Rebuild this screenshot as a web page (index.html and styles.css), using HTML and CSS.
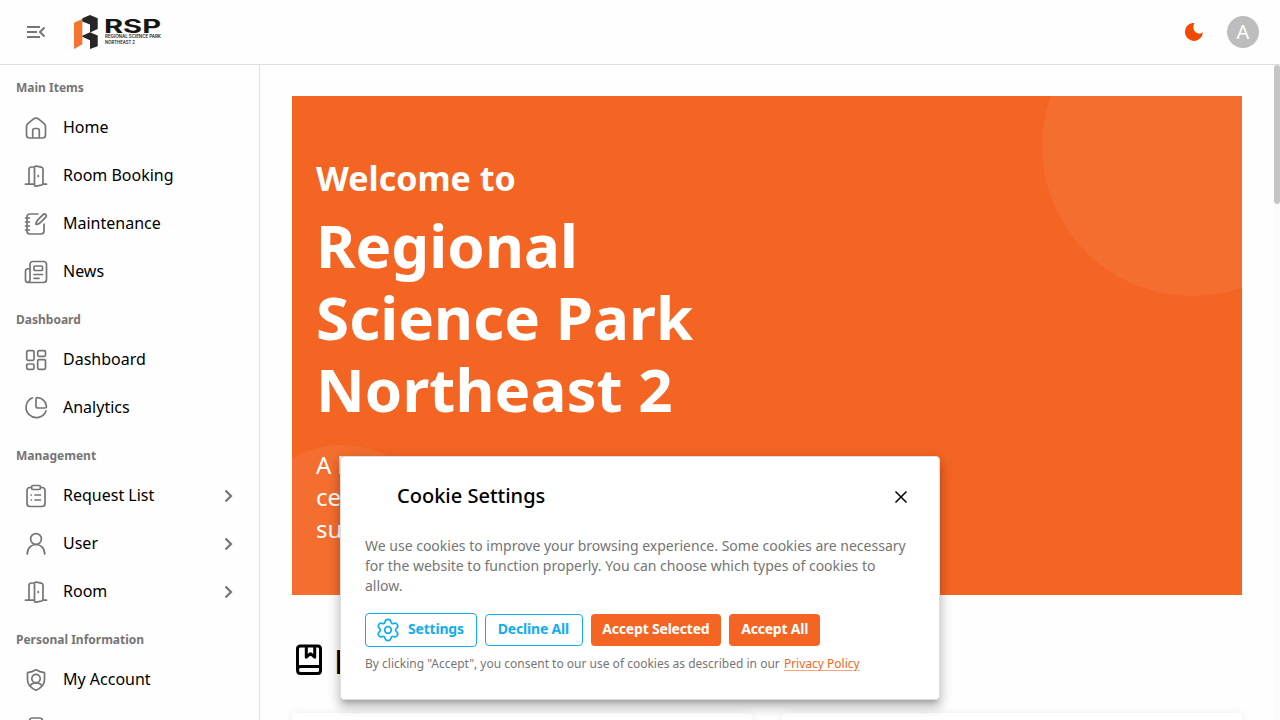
FILE: index.html
```html
<!DOCTYPE html>
<html lang="en">
<head>
<meta charset="utf-8">
<title>Regional Science Park Northeast 2</title>
<link rel="stylesheet" href="styles.css">
</head>
<body>
<svg class="defs" aria-hidden="true">
  <symbol id="door" viewBox="0 0 24 24"><path d="M1.500 20.200h9M18.500 20.200h4M5 20V5.500C5 4 5.700 3 7.500 3h3M10.500 3.700v17.200c0 1 .6 1.500 1.700 1.300l5-1c1.300-.3 1.800-1 1.800-2.200V5.300c0-1.300-.5-1.900-1.800-2.100l-4.700-1.100c-1.400-.3-2 .4-2 1.600z"/><path d="M14.200 11.500v1"/></symbol>
  <symbol id="chevron" viewBox="0 0 24 24"><path d="m9.500 6.500 5.500 5.500-5.500 5.500"/></symbol>
</svg>
<header class="topbar">
  <button class="icon-button" aria-label="Collapse menu"><svg class="menu-icon" viewBox="0 0 24 24"><path d="M3 7h13M3 12h10M3 17h13M20.500 7.500 16 12l4.500 4.500"/></svg></button>
  <svg class="logo" viewBox="0 0 90 36" aria-label="RSP">
    <path fill="#f47430" d="M1 8.800 9.300 5v25.200L1 35z"/>
    <path fill="#272525" d="M9.300 4.300 17 1l7.700 3.300V15L17 18.500v-8L9.300 7.500z"/>
    <path fill="#272525" d="M9.300 21.700 17 18.300l7.700 3.200v10.800L17 35v-8.800l-7.700-3.500z"/>
    <text class="logo-name" x="31" y="18.700" textLength="57" lengthAdjust="spacingAndGlyphs">RSP</text>
    <text class="logo-sub" x="32" y="24" textLength="56" lengthAdjust="spacingAndGlyphs">REGIONAL SCIENCE PARK</text>
    <text class="logo-sub" x="32" y="30" textLength="30" lengthAdjust="spacingAndGlyphs">NORTHEAST 2</text>
  </svg>
  <div class="top-actions">
    <svg class="moon" viewBox="0 0 24 24"><path d="M10.500 3a9 9 0 1 0 10.400 9.300C16 16.500 8.500 10.500 12.500 3.100Q11.500 3 10.500 3z"/></svg>
    <div class="avatar">A</div>
  </div>
</header>
<div class="shell">
  <nav class="sidebar">
    <h2 class="nav-title">Main Items</h2>
    <a class="nav-item"><svg class="icon" viewBox="0 0 24 24"><path d="M2.500 10.500c0-1.500.5-2.200 1.600-3.100l5.200-4.200c1.900-1.500 3.500-1.500 5.400 0l5.200 4.200c1.100.9 1.600 1.600 1.600 3.100V19c0 2-1 3-3 3h-13c-2 0-3-1-3-3zM8.700 21.500v-7c0-1.300.7-2 2-2h2.600c1.300 0 2 .7 2 2v7"/></svg>Home</a>
    <a class="nav-item"><svg class="icon"><use href="#door"/></svg>Room Booking</a>
    <a class="nav-item"><svg class="icon" viewBox="0 0 24 24"><path d="M14 2H6C4 2 3 3 3 5v14c0 2 1 3 3 3h11c2 0 3-1 3-3v-7M1.500 6h4M1.500 10h4M1.500 14h4M1.500 18h4M12 12.500c0-2 .4-3.300 1.800-4.700l5-5c2-2 4.700.5 2.800 2.600l-5 5c-1.300 1.400-2.600 2-4.600 2.100z"/></svg>Maintenance</a>
    <a class="nav-item"><svg class="icon" viewBox="0 0 24 24"><path d="M9 1.500h10.500c2 0 3 1 3 3v15c0 2-1 3-3 3h-15c-1.700 0-3-1-3-2.500V11c0-1.500 1-2.500 4.500-2.500M6 19.500v-15c0-2 1-3 3-3M6 19.500c0 2-1 3-2.500 3M10 14.500h8.500M10 18.300h5"/><rect x="10" y="6" width="8.500" height="4.500" rx="1"/></svg>News</a>
    <h2 class="nav-title">Dashboard</h2>
    <a class="nav-item"><svg class="icon" viewBox="0 0 24 24"><rect x="2.700" y="2.700" width="7.300" height="9.600" rx="1.200"/><rect x="13.700" y="2.700" width="7.800" height="5.600" rx="1.200"/><rect x="2.700" y="16" width="7.300" height="5.300" rx="1.200"/><rect x="13.700" y="11.700" width="7.800" height="9.600" rx="1.200"/></svg>Dashboard</a>
    <a class="nav-item"><svg class="icon" viewBox="0 0 24 24"><path d="M8.500 1.800A10.300 10.300 0 1 0 22 15M12 3.300C12 2 12.500 1.400 14 1.600A9.500 9.500 0 0 1 22.400 10c.2 1.500-.3 2-1.600 2H14c-1.500 0-2-.5-2-2z"/></svg>Analytics</a>
    <h2 class="nav-title">Management</h2>
    <a class="nav-item"><svg class="icon" viewBox="0 0 24 24"><path d="M7.500 3.500H6c-2 0-3 1-3 3V19.500c0 2 1 3 3 3h12c2 0 3-1 3-3v-13c0-2-1-3-3-3h-1.500M7.200 11h.2M11 11h5.500M7.200 16h.2M11 16h5.500"/><rect x="7.500" y="1.500" width="9" height="4" rx="1.500"/></svg>Request List<svg class="chevron"><use href="#chevron"/></svg></a>
    <a class="nav-item"><svg class="icon" viewBox="0 0 24 24"><circle cx="12" cy="7" r="5.400"/><path d="M3.300 22c0-12.700 17.400-12.700 17.400 0"/></svg>User<svg class="chevron"><use href="#chevron"/></svg></a>
    <a class="nav-item"><svg class="icon"><use href="#door"/></svg>Room<svg class="chevron"><use href="#chevron"/></svg></a>
    <h2 class="nav-title">Personal Information</h2>
    <a class="nav-item"><svg class="icon" viewBox="0 0 24 24"><path d="M12 1.700c2.500 1.500 5.300 2.500 8.500 3v6.800c0 5-3.500 8.500-8.500 10.800-5-2.300-8.500-5.800-8.500-10.800V4.700c3.200-.5 6-1.500 8.500-3zM6 18.300c1.800-4.500 10.200-4.500 12 0"/><circle cx="12" cy="10.500" r="4.200"/></svg>My Account</a>
    <a class="nav-item"><svg class="icon" viewBox="0 0 24 24"><path d="M5.500 22V5c0-2 1-3 3-3h7c2 0 3 1 3 3v17z"/></svg></a>
  </nav>
  <main class="content">
    <section class="hero">
      <div class="bubble bubble-top"></div>
      <div class="bubble bubble-bottom"></div>
      <p class="hero-kicker">Welcome to</p>
      <h1 class="hero-title">Regional Science Park Northeast 2</h1>
      <p class="hero-text">A leading science and technology center for innovation and supporting research</p>
    </section>
    <h2 class="section-title"><svg class="book" viewBox="0 0 34 34"><path d="M5.500 26.500V6c0-2 1-3 3-3h17c2 0 3 1 3 3v21.500c0 2-1 3-3 3h-17c-2 0-3-1-3-3.500 0-2.500 1-3.500 3-3.500h20M14.300 3v11.200l4.200-3.500 4.200 3.500V3"/></svg>News</h2>
    <div class="cards"><div class="card"></div><div class="card"></div></div>
  </main>
</div>
<div class="scroll-track"><div class="scroll-thumb"></div></div>
<section class="cookie" role="dialog">
  <div class="cookie-head"><h2 class="cookie-title">Cookie Settings</h2><svg class="close" viewBox="0 0 24 24"><path d="m6 6 12 12M18 6 6 18"/></svg></div>
  <p class="cookie-text">We use cookies to improve your browsing experience. Some cookies are necessary for the website to function properly. You can choose which types of cookies to allow.</p>
  <div class="cookie-actions">
    <button class="btn btn-outline btn-settings"><svg class="gear" viewBox="0 0 24 24"><circle cx="12" cy="12" r="3.300"/><path d="M9 3.800C9.300 2 10.300 1.400 12 1.400s2.700.6 3 2.400c.3 1.700 1.400 2.200 2.900 1.600 1.500-.5 2.600-.2 3.400 1.200.8 1.500.6 2.600-.6 3.600-1.500 1.100-1.500 2.500 0 3.600 1.200 1 1.400 2.100.6 3.600-.8 1.400-1.900 1.700-3.400 1.200-1.500-.6-2.600-.1-2.900 1.600-.3 1.800-1.300 2.400-3 2.400s-2.700-.6-3-2.400c-.3-1.700-1.400-2.200-2.900-1.600-1.500.5-2.600.2-3.400-1.200-.8-1.500-.6-2.600.6-3.600 1.500-1.100 1.500-2.500 0-3.600-1.200-1-1.400-2.100-.6-3.600.8-1.400 1.900-1.700 3.400-1.200 1.500.6 2.600.1 2.900-1.600z"/></svg><span class="btn-label">Settings</span></button>
    <button class="btn btn-outline">Decline All</button>
    <button class="btn btn-fill">Accept Selected</button>
    <button class="btn btn-fill">Accept All</button>
  </div>
  <p class="cookie-note">By clicking "Accept", you consent to our use of cookies as described in our <a class="link">Privacy Policy</a></p>
</section>
</body>
</html>
```
FILE: styles.css
```css
* { box-sizing: border-box; }
body { margin: 0; width: 1280px; height: 720px; overflow: hidden; position: relative; background: #fefefe; color: #000; font: 16px/24px "Noto Sans", sans-serif; }
h1, h2, p { margin: 0; }
button { font-family: inherit; background: none; border: 0; padding: 0; }
.defs { display: none; }
svg { fill: none; stroke-linecap: round; stroke-linejoin: round; flex-shrink: 0; }
.topbar { height: 65px; border-bottom: 1px solid #dfdfdf; display: flex; align-items: center; padding: 0 21px 0 24px; }
.icon-button { display: flex; }
.menu-icon { width: 24px; height: 24px; stroke: #757575; stroke-width: 2; stroke-linecap: butt; stroke-linejoin: miter; }
.logo { width: 90px; height: 36px; margin-left: 25px; }
.logo-name { font: 700 18.800px "Inter", sans-serif; fill: #161616; stroke: none; }
.logo-sub { font: 600 4.300px "Inter", sans-serif; fill: #222; }
.top-actions { margin-left: auto; display: flex; align-items: center; gap: 21px; }
.moon { width: 24px; height: 24px; fill: #f04a00; }
.avatar { width: 32px; height: 32px; border-radius: 50%; background: #bdbdbd; color: #fff; font-size: 20px; line-height: 31px; text-align: center; }
.shell { display: flex; height: 655px; }
.sidebar { width: 260px; border-right: 1px solid #dfdfdf; overflow: hidden; flex-shrink: 0; }
.nav-title { font-size: 12px; line-height: 18px; font-weight: 700; color: #757575; padding: 14px 16px 6px; height: 38px; }
.nav-item + .nav-title { height: 40px; padding-top: 16px; padding-bottom: 4px; }
.nav-item { display: flex; align-items: center; height: 48px; padding: 0 19px 0 24px; }
.icon { width: 24px; height: 24px; margin: 2px 15px 0 0; stroke: #757575; stroke-width: 1.700; }
.chevron { width: 24px; height: 24px; margin: 2px 0 0 auto; stroke: #757575; stroke-width: 2.200; stroke-linecap: butt; stroke-linejoin: miter; }
.content { flex: 1; padding: 31px 38px 0 32px; overflow: hidden; }
.hero { position: relative; overflow: hidden; height: 499px; background: #f46523; color: #fff; padding: 61px 24px 0; }
.bubble { position: absolute; border-radius: 50%; background: rgba(255,255,255,.06); }
.bubble-top { width: 300px; height: 300px; right: -100px; top: -100px; }
.bubble-bottom { width: 200px; height: 200px; left: -50px; bottom: -50px; }
.hero-kicker { font-size: 34px; line-height: 42px; font-weight: 700; margin-bottom: 10px; }
.hero-title { width: 400px; font-size: 60px; line-height: 72px; font-weight: 700; letter-spacing: .070px; margin-bottom: 24px; }
.hero-text { width: 390px; font-size: 24px; line-height: 32px; }
.section-title { display: flex; align-items: center; gap: 8px; margin-top: 45px; height: 42px; font-size: 34px; line-height: 42px; font-weight: 700; }
.book { width: 34px; height: 34px; margin-bottom: 2px; stroke: #000; stroke-width: 3; }
.cards { display: flex; gap: 30px; margin-top: 31px; }
.card { flex: 1; height: 100px; border-radius: 4px; background: #fff; box-shadow: 0 0 8px rgba(0,0,0,.07); }
.scroll-track { position: absolute; right: 0; top: 65px; bottom: 0; width: 6px; background: #fbfbfb; }
.scroll-thumb { height: 139px; border-radius: 3px; background: #c5c5c5; }
.cookie { position: absolute; left: 340px; bottom: 20px; width: 600px; height: 244px; background: #fff; border: 1px solid #dfdfdf; border-radius: 4px; padding: 24px; box-shadow: 0 5px 5px -3px rgba(0,0,0,.2), 0 8px 10px 1px rgba(0,0,0,.14), 0 3px 14px 2px rgba(0,0,0,.12); }
.cookie-head { display: flex; justify-content: space-between; align-items: center; height: 32px; padding: 0 3px 0 32px; }
.cookie-title { font-size: 20px; line-height: 30px; padding-bottom: 2px; font-weight: 500; }
.close { width: 22px; height: 22px; stroke: #000; stroke-width: 1.600; stroke-linecap: butt; }
.cookie-text { margin-top: 23px; font-size: 14px; line-height: 20px; color: #757575; }
.cookie-actions { display: flex; align-items: center; gap: 8px; margin-top: 17px; height: 34px; }
.btn { height: 32px; border-radius: 4px; font-size: 14px; line-height: 20px; font-weight: 700; letter-spacing: -.2px; padding: 0 12px 2px 11.700px; white-space: nowrap; }
.btn-outline { border: 1px solid #13adef; color: #13adef; padding: 0 12.700px 2px 12px; }
.btn-settings { height: 34px; display: flex; align-items: center; gap: 8px; padding: 0 12px 1px 10px; }
.btn-label { padding-bottom: 2px; }
.gear { width: 24px; height: 24px; margin-top: 1px; stroke: #13adef; stroke-width: 1.700; }
.btn-fill { background: #f46523; color: #fff; }
.cookie-note { margin-top: 8px; font-size: 12px; line-height: 18px; color: #757575; }
.link { color: #f46523; text-decoration: underline; text-decoration-color: #f9a37a; text-underline-offset: 2px; margin-left: 1px; }
```
